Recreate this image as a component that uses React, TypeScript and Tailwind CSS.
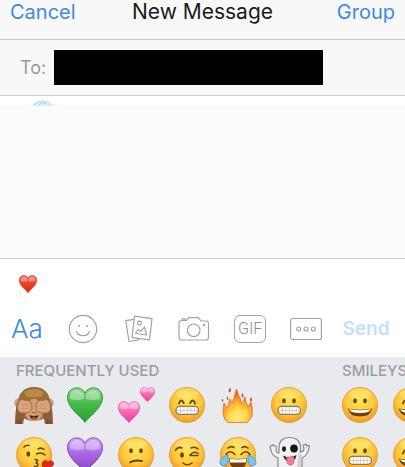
import type React from "react";
import { useId } from "react";
import clsx from "clsx";

const INK = "#6b4310";

type DrawingProps = {
  label: string;
  className?: string;
};

function Face({
  label,
  className,
  children,
}: DrawingProps & { children: React.ReactNode }) {
  const id = useId();

  return (
    <svg
      viewBox="0 0 36 36"
      role="img"
      aria-label={label}
      className={clsx("size-9 overflow-visible", className)}
    >
      <defs>
        <radialGradient id={id} cx="50%" cy="38%" r="64%">
          <stop offset="0" stopColor="#ffe253" />
          <stop offset="0.6" stopColor="#fdc93c" />
          <stop offset="1" stopColor="#ee9420" />
        </radialGradient>
      </defs>
      <circle cx="18" cy="18" r="17.6" fill={`url(#${id})`} stroke="#e09a35" strokeWidth="0.8" />
      <ellipse cx="18" cy="7" rx="11" ry="5" fill="#fff3a0" opacity="0.35" />
      {children}
    </svg>
  );
}

function DotEyes() {
  return (
    <g fill={INK}>
      <ellipse cx="13" cy="13.8" rx="1.8" ry="2.5" />
      <ellipse cx="23" cy="13.8" rx="1.8" ry="2.5" />
    </g>
  );
}

function ArchEyes() {
  return (
    <path
      d="M10 16.5 Q12 10.5 14.8 16 M21.2 16 Q24 10.5 26 16.5"
      fill="none"
      stroke={INK}
      strokeWidth="1.9"
      strokeLinecap="round"
    />
  );
}

function Teeth() {
  return (
    <g>
      <rect x="7" y="19.4" width="22.4" height="8" rx="3.8" fill="#fff" stroke="#8b7965" strokeWidth="1.3" />
      <path
        d="M8 23.4H28.6M11.5 20.2V26.7M15 20.2V26.7M18.4 20.2V26.7M21.8 20.2V26.7M25.2 20.2V26.7"
        stroke="#c3b9b2"
        strokeWidth="0.7"
      />
    </g>
  );
}

function OpenMouth() {
  return (
    <g>
      <path d="M6 21.5 Q18 24 30 21.5 Q29 29.5 18 29.5 Q7 29.5 6 21.5Z" fill="#71400f" />
      <path d="M7 22.2 Q18 24.5 29 22.2 Q28 26 18 26 Q8 26 7 22.2Z" fill="#fff" />
    </g>
  );
}

function Heart({
  label,
  className,
  light,
  mid,
  dark,
}: DrawingProps & { light: string; mid: string; dark: string }) {
  const id = useId();

  return (
    <svg
      viewBox="0 0 36 36"
      role="img"
      aria-label={label}
      className={clsx("overflow-visible", className)}
    >
      <defs>
        <linearGradient id={id} x1="0" y1="0" x2="0" y2="1">
          <stop offset="0" stopColor={light} />
          <stop offset="0.45" stopColor={mid} />
          <stop offset="1" stopColor={dark} />
        </linearGradient>
      </defs>
      <path
        d="M18 35.5C15 30 0.5 21.5 0.5 10.5C0.5 0 13.5 -2.5 18 6C22.5 -2.5 35.5 0 35.5 10.5C35.5 21.5 21 30 18 35.5Z"
        fill={`url(#${id})`}
        stroke={dark}
        strokeWidth="1"
      />
      <path
        d="M3 10C3 2 13 0 17 8V12Q10 14 3.5 12ZM19 8C23 0 33 2 33 10L32.5 12Q26 14 19 12Z"
        fill="#fff"
        opacity="0.36"
      />
    </svg>
  );
}

function TwoHearts() {
  return (
    <span role="img" aria-label="two hearts" className="flex size-9 items-end">
      <Heart label="" className="size-[22px] shrink-0" light="#ffb5dc" mid="#fb68b5" dark="#e73f94" />
      <Heart label="" className="size-[15px] shrink-0 self-start" light="#ffb5dc" mid="#fb68b5" dark="#e73f94" />
    </span>
  );
}

function Monkey() {
  return (
    <svg viewBox="0 0 36 36" role="img" aria-label="monkey covering its eyes" className="size-9 overflow-visible">
      <circle cx="2.8" cy="16" r="4.5" fill="#c9a07b" />
      <circle cx="33.2" cy="16" r="4.5" fill="#c9a07b" />
      <path d="M3 20C1 8 7 0.5 18 0.5S35 8 33 20L30 30Q18 37 6 30Z" fill="#9a7033" stroke="#77552b" strokeWidth="0.8" />
      <path d="M8 5Q18 -1 28 5L25 10H11Z" fill="#b98b47" />
      <path d="M14.5 13Q18 10 21.5 13L27 25Q26 34 18 34Q10 34 9 25Z" fill="#cf9f72" />
      <path d="M1 15Q-1 26 -1 37H7L9 27ZM35 15Q37 26 37 37H29L27 27Z" fill="#8b5c37" />
      <path d="M2 37V33M4.4 37V32.5M31.6 37V32.5M34 37V33" stroke="#5e3b20" strokeWidth="0.8" />
      <path
        d="M2 17C3 12 7 12 9 13.5C13 12 16 16 16 20C16 24 13 26.5 9 26C3 27 0 23 2 17Z"
        fill="#d9a37b"
        stroke="#9a6c45"
        strokeWidth="1"
      />
      <path
        d="M34 17C33 12 29 12 27 13.5C23 12 20 16 20 20C20 24 23 26.5 27 26C33 27 36 23 34 17Z"
        fill="#d9a37b"
        stroke="#9a6c45"
        strokeWidth="1"
      />
      <path d="M6 18Q10 17 13 18.5M6 21.5H13M30 18Q26 17 23 18.5M30 21.5H23" fill="none" stroke="#c08c66" strokeWidth="0.6" />
      <path d="M16.5 25L17.2 26M19.5 25L18.8 26" stroke="#5a3417" strokeWidth="1" />
      <path d="M13.5 28Q18 30 22.5 28Q21.5 32.5 18 32.5T13.5 28Z" fill="#5b1d16" />
      <path d="M15.5 30.8Q18 29.5 20.5 30.8Q18 33 15.5 30.8Z" fill="#e0645c" />
    </svg>
  );
}

function Fire() {
  const id = useId();

  return (
    <svg viewBox="0 0 36 36" role="img" aria-label="fire" className="size-9 overflow-visible">
      <defs>
        <radialGradient id={id} cx="50%" cy="88%" r="78%">
          <stop offset="0" stopColor="#fff3a2" />
          <stop offset="0.35" stopColor="#ffd33f" />
          <stop offset="0.7" stopColor="#fba12a" />
          <stop offset="1" stopColor="#e75a1d" />
        </radialGradient>
      </defs>
      <path
        d="M8 35.5C2.5 32 2.5 25 4 16C5.5 18 6 20 7 21C9 19 8 16 10 12C11 14 11 15 12 16C14 12 15 7 16.5 2C18 6 18 8 20 11C21 13 21 15 22 17C24 15 23.5 13 25 10C25.5 14 27 17 28 20L31 15C33 23 33.5 31 27 35.5Z"
        fill={`url(#${id})`}
        stroke="#e4682a"
        strokeWidth="0.8"
      />
      <path
        d="M9 34C6 30 8 25 10 21L13 26L17 15L21 25L25 20C29 26 29 31 26 34Z"
        fill="#ffe45c"
        opacity="0.5"
      />
      <path
        d="M10 0.5Q7.5 4 9.5 5.5Q12 4 10 0.5ZM22.5 6Q20.5 9 22.5 10.5Q24.5 9 22.5 6ZM31 10Q29 13 31 15Q33 13 31 10ZM2.5 11.5Q1 14 2.5 15Q4 14 2.5 11.5ZM7.5 9Q6 12 7.5 13Q9 12 7.5 9Z"
        fill="#c94b2d"
      />
    </svg>
  );
}

function Kiss() {
  return (
    <Face label="face blowing a kiss">
      <ellipse cx="12.3" cy="17" rx="1.9" ry="2.7" fill={INK} />
      <path
        d="M8 10Q10 7.5 13 8.5M22 12Q25 10 28 12.5M20.5 17Q25 14.5 29 18"
        fill="none"
        stroke={INK}
        strokeWidth="1.5"
        strokeLinecap="round"
      />
      <path d="M18.5 22.5Q23 22.5 21 25Q20 26 19.5 26Q23.5 26.5 21 29Q20 30 18 29.5" fill="none" stroke={INK} strokeWidth="1.5" />
      <path
        d="M31 32C27 31 25 27.5 27 25C29 22.5 31 23.5 32 25.5C33.5 23 37 23.5 37.5 26C38 29.5 34 31 31 32Z"
        fill="#e2271c"
        stroke="#a91c19"
        strokeWidth="0.7"
      />
    </Face>
  );
}

function Confused() {
  return (
    <Face label="confused face">
      <DotEyes />
      <path d="M12 25.5Q16 22.5 24 24" fill="none" stroke={INK} strokeWidth="1.8" strokeLinecap="round" />
    </Face>
  );
}

function Wink() {
  return (
    <Face label="winking face">
      <ellipse cx="13" cy="18" rx="1.9" ry="2.7" fill={INK} />
      <path
        d="M6.5 13.5Q9 9 13 11M21 18.5L29 18.5M21 18Q25 13.5 29 16.5M22 11Q26 9 29 12M14 26Q18 29.5 23 26"
        fill="none"
        stroke={INK}
        strokeWidth="1.5"
        strokeLinecap="round"
      />
    </Face>
  );
}

function Joy() {
  return (
    <Face label="face with tears of joy">
      <path
        d="M8 11Q11 8.5 14 10.5M22 10.5Q25 8.5 28 11M6 17.5Q10 12 15 17.5M21 17.5Q26 12 30 17.5"
        fill="none"
        stroke={INK}
        strokeWidth="1.6"
        strokeLinecap="round"
      />
      <path d="M9 21Q18 23 27 21Q27 32 18 32Q9 32 9 21Z" fill="#72400f" />
      <path d="M9.5 21.5Q18 23.5 26.5 21.5L26 25.5H10Z" fill="#fff" />
      <path
        d="M8 18C5 19 0 21 0 25.5C0 30 7 30 8 25ZM28 18C31 19 36 21 36 25.5C36 30 29 30 28 25Z"
        fill="#7fc3f2"
        stroke="#4596d1"
        strokeWidth="0.9"
      />
    </Face>
  );
}

function Ghost() {
  return (
    <svg viewBox="0 0 36 36" role="img" aria-label="ghost" className="size-9 overflow-visible">
      <path
        d="M8 11C8 3.5 12 0.5 18.5 0.5S29.5 4 29.5 11V15Q33 15 33 11Q31 7 34 8Q35 6 36 9Q39 7 38 11Q37 18 31 21V36H7V21Q1 19 0 13Q-2 8 1 9Q2 6 3 9Q6 8 5 12Q5 16 8 16Z"
        fill="#f1f1f2"
        stroke="#87878b"
        strokeWidth="1.2"
      />
      <path d="M27 7Q29 22 24 36H30V21L31 18Q28 18 27 7Z" fill="#c4c4c9" opacity="0.7" />
      <ellipse cx="13" cy="12" rx="2" ry="2.8" fill="#222" />
      <ellipse cx="23" cy="11.5" rx="3.8" ry="4" fill="#161616" />
      <path d="M12 18.5Q19 22 25.5 18Q25 24 19 24T12 18.5Z" fill="#363033" />
      <path d="M15.5 20.5Q19 19.5 23 20V24C23 29 17 29.5 16 25Z" fill="#f77d98" stroke="#c9506f" strokeWidth="0.7" />
    </svg>
  );
}

function Grimace() {
  return (
    <Face label="grimacing face">
      <DotEyes />
      <Teeth />
    </Face>
  );
}

function GrinningTeeth() {
  return (
    <Face label="beaming face">
      <ArchEyes />
      <Teeth />
    </Face>
  );
}

function Smile({ eyes }: { eyes: "dot" | "arch" }) {
  return (
    <Face label="grinning face">
      {eyes === "dot" ? <DotEyes /> : <ArchEyes />}
      <OpenMouth />
    </Face>
  );
}

const frequent = [
  <Monkey />,
  <Heart label="green heart" className="size-9" light="#8ed490" mid="#45bd4a" dark="#2b9c35" />,
  <TwoHearts />,
  <GrinningTeeth />,
  <Fire />,
  <Grimace />,
  <Kiss />,
  <Heart label="purple heart" className="size-9" light="#cbaaf0" mid="#aa68e3" dark="#8942c6" />,
  <Confused />,
  <Wink />,
  <Joy />,
  <Ghost />,
];

const smileys = [
  <Smile eyes="dot" />,
  <Smile eyes="arch" />,
  <Grimace />,
  <Smile eyes="arch" />,
];

function EmojiSection({
  title,
  items,
  gridClassName,
}: {
  title: string;
  items: React.ReactNode[];
  gridClassName: string;
}) {
  return (
    <section className="shrink-0">
      <h2 className="h-6 text-[15px] leading-4 font-medium whitespace-nowrap text-[#9b9da2]">
        {title}
      </h2>
      <div className={clsx("grid gap-x-[15px] gap-y-[14px]", gridClassName)}>
        {items.map((item, i) => (
          <button key={i} type="button" className="size-9">
            {item}
          </button>
        ))}
      </div>
    </section>
  );
}

function ToolButton({
  label,
  children,
}: {
  label: string;
  children: React.ReactNode;
}) {
  return (
    <button type="button" aria-label={label} className="flex size-8 items-center justify-center">
      <svg
        viewBox="0 0 32 32"
        className="size-8 overflow-visible"
        fill="none"
        stroke="#a3a3a5"
        strokeWidth="1.2"
        strokeLinejoin="round"
        strokeLinecap="round"
      >
        {children}
      </svg>
    </button>
  );
}

function Toolbar() {
  return (
    <div className="flex items-center pr-[15px] pl-[11px]">
      <div className="flex flex-1 items-center justify-between">
        <button type="button" className="w-8 text-[26px] leading-8 font-light text-[#3b8ae6]">
          Aa
        </button>
        <ToolButton label="Stickers">
          <circle cx="16" cy="16" r="13.7" />
          <path d="M9.5 18.5Q11 22.7 16 22.7T22.5 18.5" />
          <circle cx="12" cy="13" r="1" fill="#a3a3a5" stroke="none" />
          <circle cx="20" cy="13" r="1" fill="#a3a3a5" stroke="none" />
        </ToolButton>
        <ToolButton label="Photos">
          <path d="M11.5 3.2L29 5.7L26.5 26.8L9 24.6Z" />
          <path d="M10.8 6.4L2.8 7.6L6 28.5L15.5 26.8V25.6" />
          <circle cx="16.5" cy="10" r="1.9" />
          <path d="M12.5 20.5L15.3 16.5L17.5 18.3L21.7 14L23.5 22L12.5 20.5Z" />
        </ToolButton>
        <ToolButton label="Camera">
          <path d="M3 7.5H8.5L10.8 4.7H20.5L23 8H28Q30.5 8 30.5 10.5V24.5Q30.5 27 28 27H3.5Q1 27 1 24.5V10Q1 8 3 7.5ZM4 7.4V5.8H7.2V7.4" />
          <circle cx="15.7" cy="17.3" r="6.3" />
          <circle cx="26" cy="12" r="0.7" fill="#a3a3a5" />
        </ToolButton>
        <button
          type="button"
          className="flex h-7 w-8 items-center justify-center rounded-md border border-[#a3a3a5] font-['Roboto',sans-serif] text-base font-light text-[#8b8b8d]"
        >
          GIF
        </button>
        <ToolButton label="More">
          <rect x="0.6" y="5.5" width="30.8" height="21" rx="2" />
          <circle cx="8.7" cy="16" r="2" />
          <circle cx="16" cy="16" r="2" />
          <circle cx="23.3" cy="16" r="2" />
        </ToolButton>
      </div>
      <button type="button" className="ml-5 w-12 text-[19px] leading-8 font-semibold text-[#c3e0fa]">
        Send
      </button>
    </div>
  );
}

export default function App() {
  return (
    <main className="flex h-screen flex-col overflow-hidden bg-white font-['Inter',sans-serif]">
      <header className="grid grid-cols-[1fr_auto_1fr] border-b border-[#c9c9ca] bg-[#f8f8f8] px-[10px] pb-[15px] text-xl leading-6 text-[#3b8ae6]">
        <button type="button" className="justify-self-start leading-6">
          Cancel
        </button>
        <h1 className="text-[21px] leading-6 text-[#1b1b1b]">New Message</h1>
        <button type="button" className="justify-self-end leading-6">
          Group
        </button>
      </header>

      <div className="flex items-center border-b border-[#cdcdce] bg-[#f8f8f8] py-[10px] pr-[82px] pl-5">
        <label htmlFor="recipient" className="w-[34px] text-lg text-[#98989b]">
          To:
        </label>
        <input id="recipient" type="text" className="h-[35px] min-w-0 flex-1 bg-black text-white outline-none" />
      </div>

      {/* top of the contact bubble, cut off by the thread below */}
      <div className="flex h-[10px] shrink-0 items-end pl-[30px]">
        <svg viewBox="0 0 28 6" className="h-[6px] w-7" aria-hidden="true">
          <path d="M0 6Q12 -5 26 6Z" fill="#e0f1fc" />
          <path d="M4 5Q12 -2 20 5M9 5Q13 1 17 5" fill="none" stroke="#8cc8f4" strokeDasharray="2 1" />
        </svg>
      </div>
      <div className="flex-1 bg-[#fafcfc]" />

      <div className="flex h-[99px] shrink-0 flex-col justify-between border-t border-[#cacccc] bg-white pt-4 pb-3">
        <div role="textbox" aria-label="Message" className="px-[19px]">
          <Heart label="red heart" className="size-[18px]" light="#d96458" mid="#ee4328" dark="#d9240e" />
        </div>
        <Toolbar />
      </div>

      <div className="flex h-[110px] shrink-0 gap-[35px] overflow-hidden bg-[#e9eaee] pt-[6px] pl-4">
        <EmojiSection title="FREQUENTLY USED" items={frequent} gridClassName="grid-cols-6" />
        <EmojiSection title="SMILEYS" items={smileys} gridClassName="w-[87px] grid-cols-2" />
      </div>
    </main>
  );
}
